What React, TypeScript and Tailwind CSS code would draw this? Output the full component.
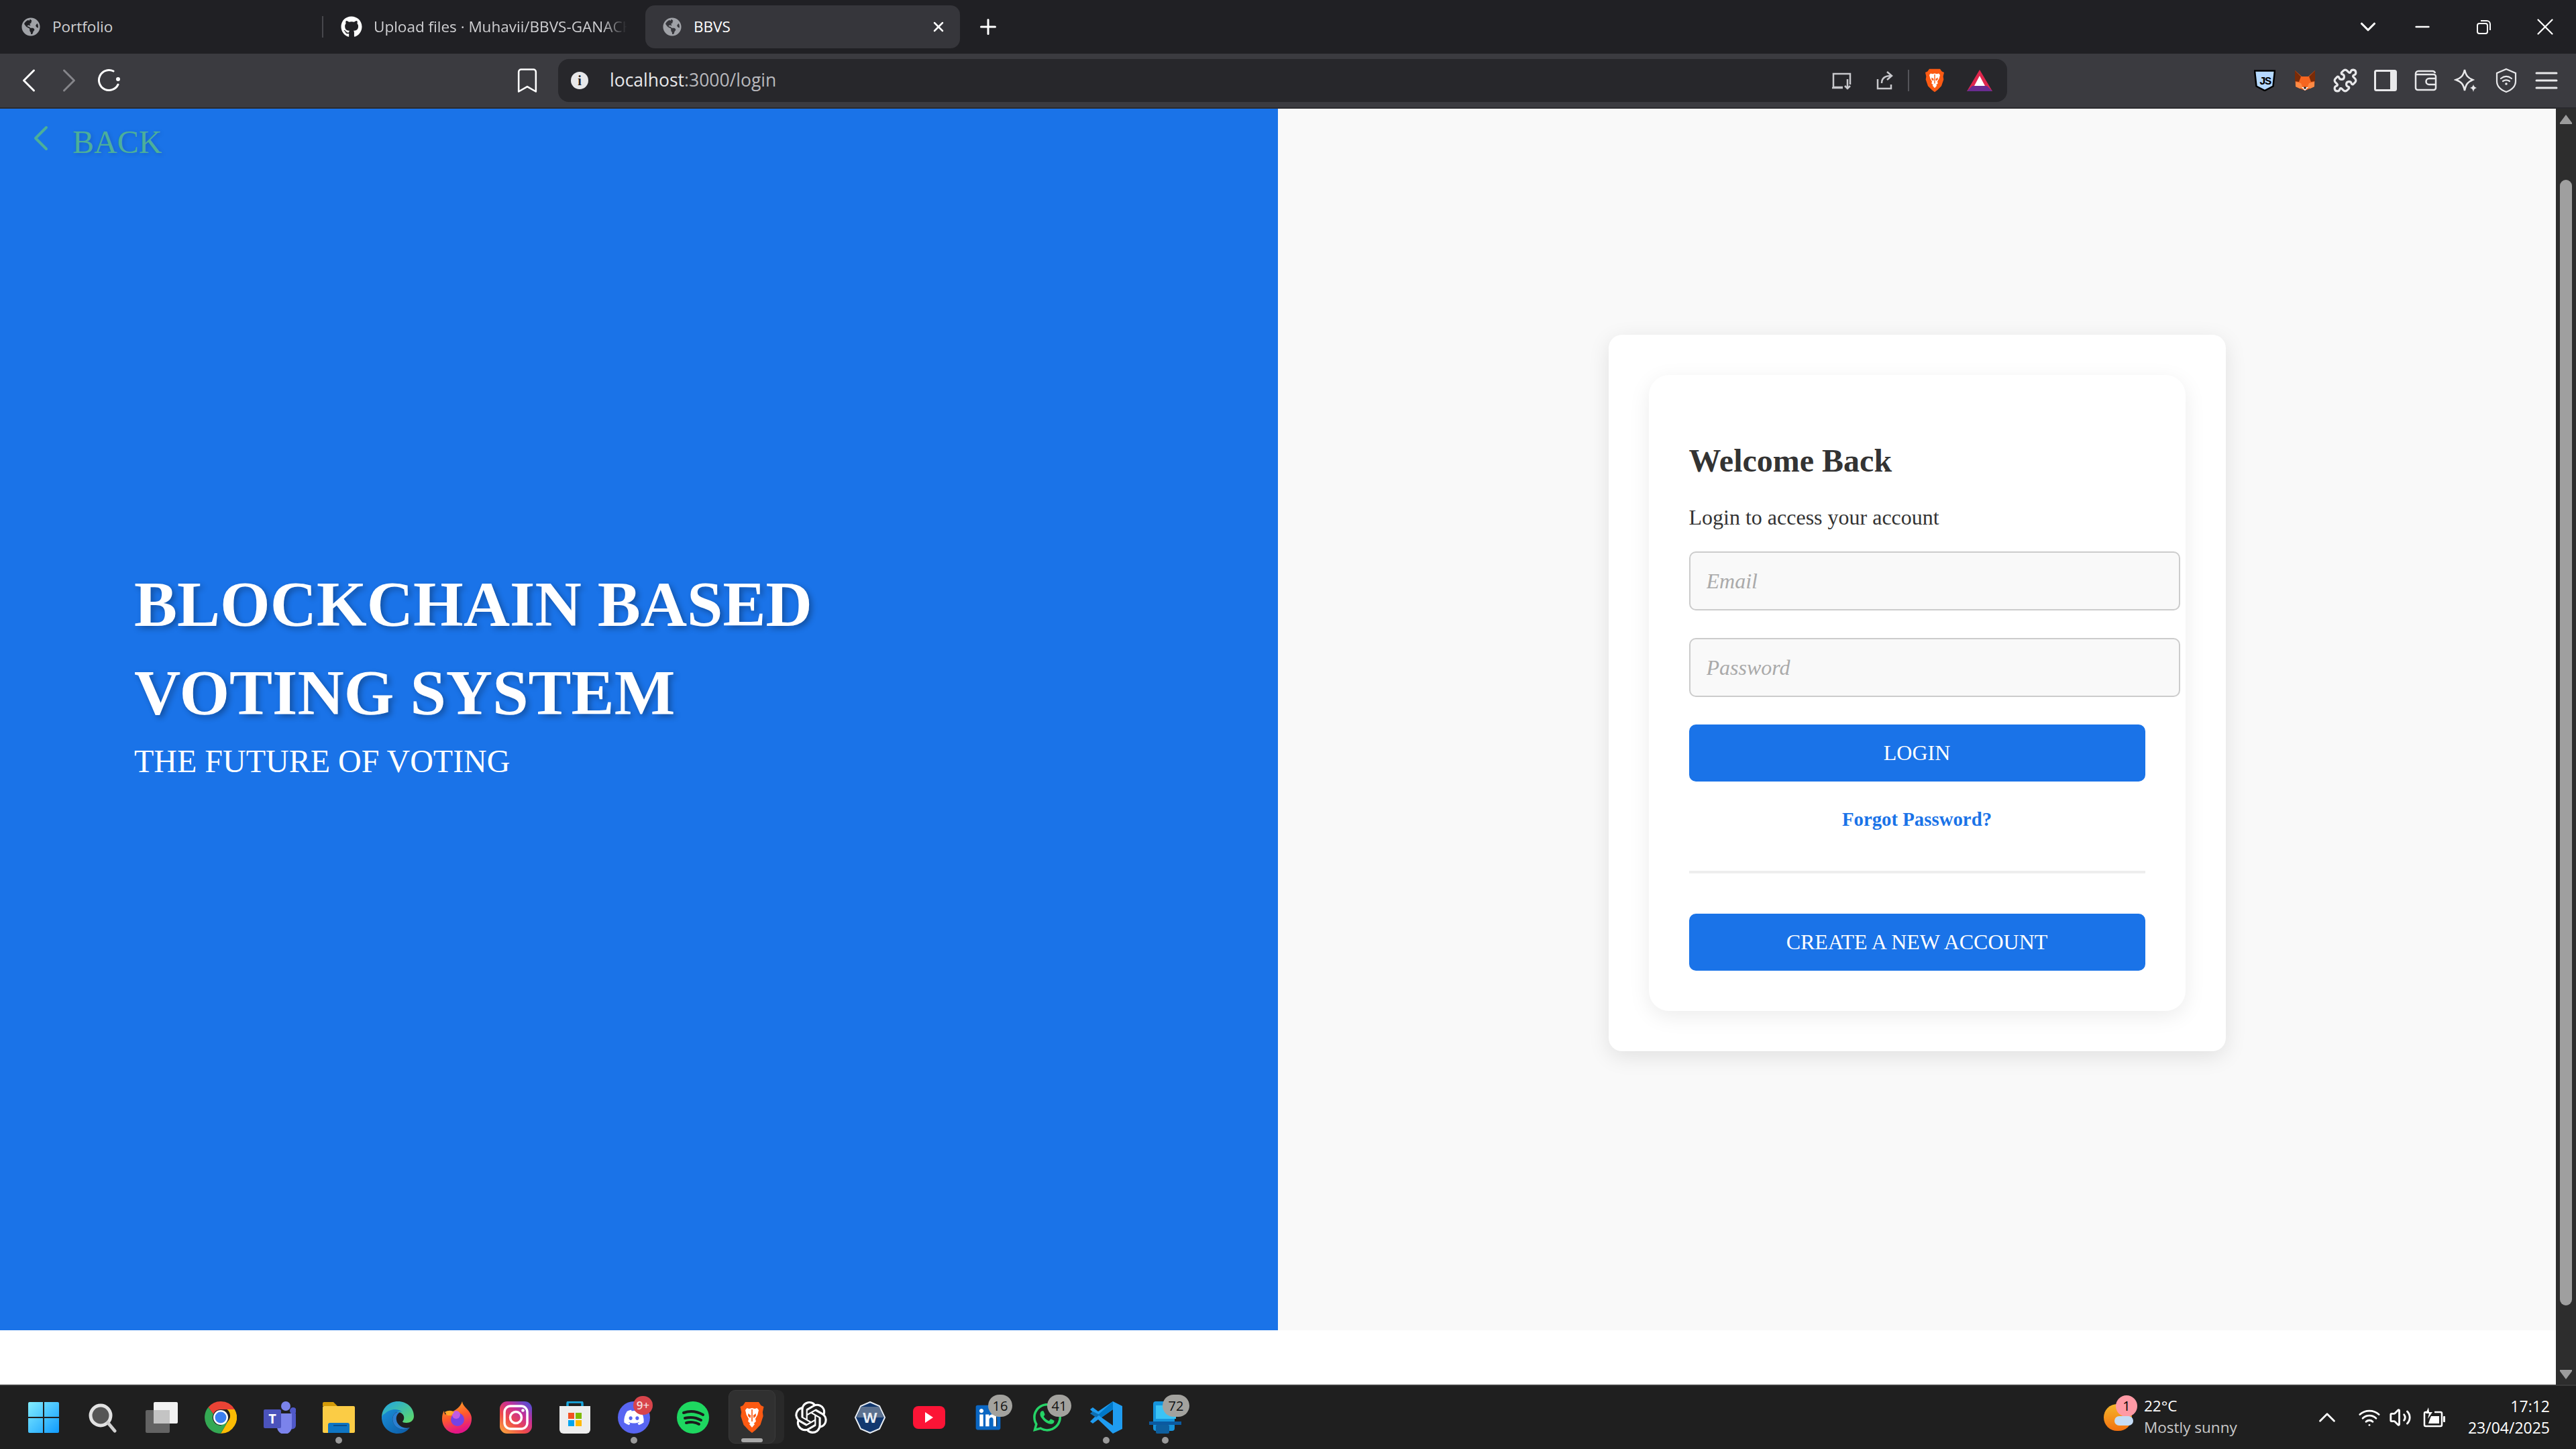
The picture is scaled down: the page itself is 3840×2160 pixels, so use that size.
import React from 'react'
import { ChevronLeft, ChevronRight, ChevronDown, ChevronUp, Bookmark, Plus, X, Minus, Puzzle, Wifi, Volume2 } from 'lucide-react'
import { FaGithub, FaGlobeAmericas, FaLinkedin, FaWhatsapp, FaDiscord } from 'react-icons/fa'
import { SiOpenai } from 'react-icons/si'

function BraveLogo({ width, height }: { width: number; height: number }) {
  return (
    <svg width={width} height={height} viewBox="0 0 48 48" preserveAspectRatio="none">
      <path d="M12 1h24l4 5 5 2-2 8 1 6-5 13-9 8-6 4-6-4-9-8L4 22l1-6-2-8 5-2z" fill="#fb5a13" />
      <path d="M24 10l5 1 4-1 3 3-2 7-4 6 1 4-4 3-3 1-3-1-4-3 1-4-4-6-2-7 3-3 4 1z" fill="#fff" />
      <path d="M17 18l5 3-1 4-4-3zM31 18l-5 3 1 4 4-3zM23 12h2v18h-2z" fill="#fb5a13" />
      <path d="M19 34l5-3 5 3-5 5z" fill="#fff" />
    </svg>
  )
}

function JsShield() {
  return (
    <svg width="32" height="32" viewBox="0 0 32 32">
      <path d="M1 1.5h30l-2.5 23L16 31 3.5 24.500z" fill="#b5d9ff" stroke="#000" strokeWidth="2.500" />
      <text x="16" y="22" textAnchor="middle" fontFamily="Liberation Mono, monospace" fontWeight="700" fontSize="17" letterSpacing="-2" fill="#000">JS</text>
    </svg>
  )
}

function FoxIcon() {
  return (
    <svg width="32" height="30" viewBox="0 0 32 30">
      <path d="M1 0l10 9h10L31 0l-1 24-14 6L2 24z" fill="#f6651f" />
      <path d="M1 0l9 9-3 8-6-1zM31 0l-9 9 3 8 6-1z" fill="#7a2b07" />
      <path d="M2 17l8 2 3 7-5 1-6-3zM30 17l-8 2-3 7 5 1 6-3z" fill="#ff8a45" />
      <path d="M11 25h10l-5 5z" fill="#fff" />
      <circle cx="16" cy="26" r="1.800" fill="#222" />
    </svg>
  )
}

function TaskSlot({ children, dot, pill }: { children: React.ReactNode; dot?: boolean; pill?: boolean }) {
  return (
    <div className="relative flex h-full w-[88px] items-center justify-center">
      {pill && (
        <>
          <div className="absolute top-[6px] left-[13px] h-[80px] w-[79px] rounded-[10px] bg-[#292929]" />
          <div className="absolute top-[6px] left-[9px] h-[80px] w-[70px] rounded-[10px] border border-[#3a3a3a] bg-[#303030]" />
          <div className="absolute bottom-[10px] left-[28px] h-[6px] w-[32px] rounded-full bg-[#a8a8a8]" />
        </>
      )}
      <div className="relative flex h-[48px] w-[48px] items-center justify-center">{children}</div>
      {dot && <div className="absolute bottom-[8px] left-[39px] h-[10px] w-[10px] rounded-full bg-[#9a9a9a]" />}
    </div>
  )
}

function CountBadge({ n, wide }: { n: string; wide?: boolean }) {
  return (
    <div className={`absolute -top-[10px] -right-[12px] flex h-[33px] items-center justify-center rounded-full bg-[#a3a29e] text-[20px] text-[#111] ${wide ? 'w-[40px]' : 'w-[36px]'}`}>
      {n}
    </div>
  )
}

function Taskbar() {
  return (
    <div className="flex h-[96px] items-center border-t-2 border-[#3a3a3a] bg-[#1f1f1f] pl-[21px] font-['Open_Sans',sans-serif]">
      <TaskSlot>
        <svg width="46" height="46" viewBox="0 0 46 46">
          <defs>
            <linearGradient id="win" x1="0" y1="0" x2="1" y2="1">
              <stop offset="0" stopColor="#83edff" />
              <stop offset="1" stopColor="#0f9bff" />
            </linearGradient>
          </defs>
          <path d="M0 2a2 2 0 012-2h20v22H0zM24 0h20a2 2 0 012 2v20H24zM0 24h22v22H2a2 2 0 01-2-2zM24 24h22v20a2 2 0 01-2 2H24z" fill="url(#win)" />
        </svg>
      </TaskSlot>
      <TaskSlot>
        <svg width="46" height="46" viewBox="0 0 46 46">
          <circle cx="20" cy="20" r="15" fill="#555" stroke="#e2e2e2" strokeWidth="5" />
          <path d="M31 31l10 12" stroke="#d0d0d0" strokeWidth="5" strokeLinecap="round" />
        </svg>
      </TaskSlot>
      <TaskSlot>
        <svg width="48" height="46" viewBox="0 0 48 46">
          <rect x="12" y="0" width="36" height="32" rx="2" fill="#f2f2f2" />
          <rect x="0" y="12" width="36" height="34" rx="2" fill="#6a6a6a" fillOpacity="0.9" />
          <rect x="12" y="12" width="24" height="20" fill="#c4c4c4" />
        </svg>
      </TaskSlot>
      <TaskSlot>
        <svg width="48" height="48" viewBox="0 0 48 48">
          <path d="M24 0a24 24 0 0120.8 12H24a12 12 0 00-11 7L5.500 8.800A24 24 0 0124 0z" fill="#ea4335" />
          <path d="M44.800 12A24 24 0 0124 48l10.500-18a12 12 0 00-1-18z" fill="#fbbc04" />
          <path d="M5.500 8.800L13 19a12 12 0 0011 17l10.400-6L24 48A24 24 0 015.500 8.800z" fill="#34a853" />
          <circle cx="24" cy="24" r="11" fill="#fff" />
          <circle cx="24" cy="24" r="8.500" fill="#3b7ff0" />
        </svg>
      </TaskSlot>
      <TaskSlot>
        <svg width="48" height="48" viewBox="0 0 48 48">
          <circle cx="33" cy="7" r="7" fill="#7b83eb" />
          <circle cx="44" cy="14" r="5" fill="#5059c9" />
          <path d="M36 18h12v18a6 6 0 01-10 4z" fill="#5059c9" />
          <path d="M20 18h22v20a11 11 0 01-22 0z" fill="#7b83eb" />
          <rect x="0" y="12" width="26" height="28" rx="2" fill="#4b53bc" />
          <text x="13" y="33" textAnchor="middle" fontFamily="Open Sans, sans-serif" fontWeight="700" fontSize="20" fill="#fff">T</text>
        </svg>
      </TaskSlot>
      <TaskSlot dot>
        <svg width="48" height="46" viewBox="0 0 48 46">
          <path d="M0 2a2 2 0 012-2h14l6 6h-22z" fill="#d49b08" />
          <rect x="0" y="6" width="48" height="40" rx="2" fill="#fbcc45" />
          <path d="M8 34a3 3 0 013-3h26a3 3 0 013 3v12H8z" fill="#0f76c4" />
          <rect x="16" y="34" width="20" height="2" fill="#0a4f8c" />
        </svg>
      </TaskSlot>
      <TaskSlot>
        <svg width="48" height="48" viewBox="0 0 48 48">
          <defs>
            <linearGradient id="edge" x1="0" y1="0" x2="1" y2="1">
              <stop offset="0" stopColor="#1fa2e8" />
              <stop offset="1" stopColor="#62dd62" />
            </linearGradient>
            <linearGradient id="edge2" x1="0" y1="0" x2="1" y2="1">
              <stop offset="0" stopColor="#1a90d8" />
              <stop offset="1" stopColor="#0c59a4" />
            </linearGradient>
          </defs>
          <path d="M24 0C38 0 48 10 48 22c0 7-6 10-11 10-4 0-6-1-6-2 3-3 3-8 0-11-5-5-15-4-21 2C4 26 0 30 0 24 0 10 11 0 24 0z" fill="url(#edge)" />
          <path d="M0 24c0 14 11 24 24 24 8 0 13-3 18-9-7 4-14 3-19 0-6-4-9-13-5-19 3-5 9-6 13-4-8-7-20-4-26 2-3 2-5 3-5 6z" fill="url(#edge2)" />
          <path d="M18 20c-4 6-1 15 5 19 5 3 12 4 19 0-9 3-19-3-20-11-1-5 1-9 5-12-4-1-7 1-9 4z" fill="#2b7fd0" />
        </svg>
      </TaskSlot>
      <TaskSlot>
        <svg width="44" height="48" viewBox="0 0 44 48">
          <defs>
            <linearGradient id="ff" x1="0" y1="0" x2="0.3" y2="1">
              <stop offset="0" stopColor="#ffb625" />
              <stop offset="0.55" stopColor="#ff5a2b" />
              <stop offset="1" stopColor="#e31587" />
            </linearGradient>
          </defs>
          <path d="M30 0c1 8 8 10 12 18 2 4 2 6 2 8 0 13-10 22-22 22S0 39 0 26c0-5 1-9 3-12 0 3 1 5 2 6 1-3 3-5 5-6 0 2 2 3 4 2 6-3 13-7 16-16z" fill="url(#ff)" />
          <circle cx="23" cy="27" r="10" fill="#7542e5" />
          <circle cx="21" cy="20" r="6" fill="#c25be2" />
          <path d="M4 16c5-3 10-3 14 0l-4 5H8z" fill="#ffa72a" />
        </svg>
      </TaskSlot>
      <TaskSlot>
        <svg width="48" height="48" viewBox="0 0 48 48">
          <defs>
            <linearGradient id="ig" x1="0" y1="1" x2="0.8" y2="0">
              <stop offset="0" stopColor="#fdb13c" />
              <stop offset="0.4" stopColor="#ee4a4a" />
              <stop offset="0.7" stopColor="#c92f95" />
              <stop offset="1" stopColor="#5d4bd1" />
            </linearGradient>
          </defs>
          <rect width="48" height="48" rx="11" fill="url(#ig)" />
          <rect x="7" y="7" width="34" height="34" rx="9" fill="none" stroke="#fff" strokeWidth="3.500" />
          <circle cx="24" cy="24" r="8.500" fill="none" stroke="#fff" strokeWidth="3.500" />
          <circle cx="34.500" cy="13.500" r="2.300" fill="#fff" />
        </svg>
      </TaskSlot>
      <TaskSlot>
        <svg width="46" height="48" viewBox="0 0 46 48">
          <path d="M12 10V3a2 2 0 012-2h18a2 2 0 012 2v7" fill="none" stroke="#19a6dd" strokeWidth="3.500" />
          <path d="M0 7h46v35a6 6 0 01-6 6H6a6 6 0 01-6-6z" fill="#eeeeee" />
          <rect x="13" y="17" width="9" height="9" fill="#f25022" />
          <rect x="24" y="17" width="9" height="9" fill="#7fba00" />
          <rect x="13" y="28" width="9" height="9" fill="#00a4ef" />
          <rect x="24" y="28" width="9" height="9" fill="#ffb900" />
        </svg>
      </TaskSlot>
      <TaskSlot dot>
        <div className="flex h-[48px] w-[48px] items-center justify-center rounded-full bg-[#5865f2] text-white">
          <FaDiscord size={32} />
        </div>
        <div className="absolute -top-[8px] -right-[4px] flex h-[28px] w-[29px] items-center justify-center rounded-full bg-[#d8444b] text-[17px] font-semibold text-[#f4dcdc]">9+</div>
      </TaskSlot>
      <TaskSlot>
        <svg width="48" height="48" viewBox="0 0 48 48">
          <circle cx="24" cy="24" r="24" fill="#1ed760" />
          <path d="M10 17c9-3 20-2 29 3M12 25c8-2 17-1 24 3M14 32c6-2 14-1 19 2" fill="none" stroke="#1c1c1c" strokeWidth="4" strokeLinecap="round" />
        </svg>
      </TaskSlot>
      <TaskSlot pill>
        <BraveLogo width={40} height={48} />
      </TaskSlot>
      <TaskSlot>
        <SiOpenai size={48} color="#fff" />
      </TaskSlot>
      <TaskSlot>
        <svg width="46" height="48" viewBox="0 0 46 48">
          <path d="M23 1l14 6 8 17-8 17-14 6-14-6-8-17 8-17z" fill="#12386f" stroke="#e8edf3" strokeWidth="2" />
          <path d="M9 8h28l6 16H3z" fill="#7c8a9d" fillOpacity="0.7" />
          <text x="23" y="32" textAnchor="middle" fontFamily="Open Sans, sans-serif" fontWeight="700" fontSize="22" fill="#e8edf3">W</text>
        </svg>
      </TaskSlot>
      <TaskSlot>
        <div className="flex h-[34px] w-[48px] items-center justify-center rounded-[8px] bg-[#fc1436]">
          <svg width="14" height="18" viewBox="0 0 14 18">
            <path d="M1 1l12 8-12 8z" fill="#fff" />
          </svg>
        </div>
      </TaskSlot>
      <TaskSlot>
        <div className="absolute top-[8px] left-[6px] h-[32px] w-[30px] bg-white" />
        <FaLinkedin size={42} color="#0a66c2" className="relative" />
        <CountBadge n="16" />
      </TaskSlot>
      <TaskSlot>
        <FaWhatsapp size={48} color="#25d366" />
        <CountBadge n="41" />
      </TaskSlot>
      <TaskSlot dot>
        <svg width="48" height="48" viewBox="0 0 48 48">
          <path d="M34 0l14 7v34l-14 7-22-21-8 6-4-3 9-9-9-9 4-3 8 6z" fill="#1f9cf0" />
          <path d="M34 12L17 24l17 12z" fill="#1f1f1f" />
          <path d="M4 15l-4 3 9 6 5-4z" fill="#0f6fb3" />
          <path d="M34 0v12L17 24l-5-4z" fill="#0078c8" />
        </svg>
      </TaskSlot>
      <TaskSlot dot>
        <svg width="48" height="48" viewBox="0 0 48 48">
          <path d="M6 4a4 4 0 014-4h24a4 4 0 014 4v36a4 4 0 01-4 4H10a4 4 0 01-4-4z" fill="#1594dc" />
          <rect x="10" y="6" width="30" height="20" fill="#3ac3f5" />
          <rect x="0" y="30" width="48" height="5" fill="#0b5aa0" />
          <rect x="10" y="35" width="20" height="13" rx="2" fill="#0e5f9e" />
        </svg>
        <CountBadge n="72" wide />
      </TaskSlot>

      <div className="ml-[1355px] flex items-center">
        <div className="relative h-[40px] w-[42px] rounded-full bg-gradient-to-b from-[#f3b52a] to-[#f2700e]">
          <div className="absolute -top-[13px] left-[18px] flex h-[32px] w-[32px] items-center justify-center rounded-full bg-[#ff9aa5] text-[20px] text-black">1</div>
          <div className="absolute top-[18px] left-[16px] h-[14px] w-[28px] rounded-full bg-[#c5dcf5]" />
        </div>
        <div className="ml-[18px] flex w-[142px] flex-col text-[22.5px] leading-[32px]">
          <span className="-mt-[2px] text-white">22°C</span>
          <span className="text-[#c9c9c9]">Mostly sunny</span>
        </div>
      </div>
      <div className="ml-[110px] flex w-[42px] justify-center text-white">
        <ChevronUp size={42} strokeWidth={1.6} />
      </div>
      <div className="ml-[24px] flex w-[36px] justify-center text-white">
        <Wifi size={34} strokeWidth={2} />
      </div>
      <div className="ml-[10px] flex w-[36px] justify-center text-white">
        <Volume2 size={34} strokeWidth={2} />
      </div>
      <div className="ml-[15px] flex w-[36px] justify-center text-white">
        <svg width="34" height="30" viewBox="0 0 34 30" fill="none" stroke="currentColor" strokeWidth="2.500">
          <path d="M9 7H4a2 2 0 00-2 2v17a2 2 0 002 2h22a2 2 0 002-2V9a2 2 0 00-2-2h-9" />
          <path d="M8 0L4 9h5l-2 8 7-10H9z" fill="currentColor" stroke="none" />
          <path d="M12 13h12v11H8l2-6z" fill="currentColor" stroke="none" />
          <rect x="30" y="13" width="3" height="9" rx="1" fill="currentColor" stroke="none" />
        </svg>
      </div>
      <div className="ml-auto flex flex-col pr-[39px] text-right text-[23px] leading-[32px] text-white">
        <span className="-mt-[2px]">17:12</span>
        <span>23/04/2025</span>
      </div>
    </div>
  )
}

function BrowserTabs() {
  return (
    <div className="flex h-20 items-center bg-[#202024] font-['Open_Sans',sans-serif] text-[22.5px]">
      <div className="flex h-16 w-[480px] items-center gap-[18px] pl-8 text-[#cfcfd2]">
        <FaGlobeAmericas size={28} color="#a0a2a7" />
        <span>Portfolio</span>
      </div>
      <div className="h-[32px] w-[2px] bg-[#47474c]" />
      <div className="flex h-16 w-[480px] items-center gap-[17px] pl-[26px] text-[#cfcfd2]">
        <FaGithub size={32} color="#fff" />
        <span className="w-[378px] overflow-hidden whitespace-nowrap [mask-image:linear-gradient(to_right,black_90%,transparent)]">
          Upload files · Muhavii/BBVS-GANACHE
        </span>
      </div>
      <div className="flex h-16 w-[469px] items-center rounded-[14px] bg-[#36363b] pl-[26px] text-white">
        <FaGlobeAmericas size={28} color="#a0a2a7" />
        <span className="ml-[18px]">BBVS</span>
        <X size={24} strokeWidth={2.5} className="ml-auto mr-5 text-white" />
      </div>
      <Plus size={36} strokeWidth={2} className="ml-6 text-white" />
      <div className="ml-auto flex items-center text-white">
        <ChevronDown size={38} strokeWidth={2} className="mr-[46px]" />
        <Minus size={32} strokeWidth={2} className="mr-[63px]" />
        <svg width="24" height="24" viewBox="0 0 24 24" fill="none" stroke="currentColor" strokeWidth="2" className="mr-[59px]">
          <rect x="3" y="7" width="15" height="15" rx="3" />
          <path d="M8 3h9a5 5 0 015 5v9" />
        </svg>
        <X size={42} strokeWidth={1.3} className="mr-[25px]" />
      </div>
    </div>
  )
}

function BrowserToolbar() {
  return (
    <div className="flex h-[82px] items-center border-b-2 border-[#2a2a2e] bg-[#3b3b40] pl-[13px] font-['Open_Sans',sans-serif]">
      <div className="flex w-[60px] justify-center text-white">
        <ChevronLeft size={60} strokeWidth={1.2} />
      </div>
      <div className="flex w-[60px] justify-center text-[#85858a]">
        <ChevronRight size={60} strokeWidth={1.2} />
      </div>
      <div className="flex w-[60px] justify-center text-white">
        <svg width="36" height="36" viewBox="0 0 36 36" fill="none" stroke="currentColor" strokeWidth="3" strokeLinecap="round">
          <path d="M24 4A15 15 0 1031 24" />
          <circle cx="31" cy="16" r="3" fill="currentColor" stroke="none" />
        </svg>
      </div>
      <div className="ml-[563px] flex w-[60px] justify-center text-white">
        <Bookmark size={44} strokeWidth={1.4} />
      </div>
      <div className="ml-4 flex h-16 w-[2160px] items-center rounded-[16px] bg-[#27272b] pl-[19px]">
        <div className="flex h-[26px] w-[26px] items-center justify-center rounded-full bg-[#e8e8ea] font-['Liberation_Serif',serif] text-[20px] font-bold text-[#27272b]">i</div>
        <span className="ml-8 text-[26.5px] text-[#e8e8ea]">
          localhost<span className="text-[#b9b9bd]">:3000/login</span>
        </span>
        <div className="ml-auto flex items-center pr-2">
          <div className="flex w-[66px] justify-center text-[#c8c8cc]">
            <svg width="32" height="32" viewBox="0 0 32 32" fill="none" stroke="currentColor" strokeWidth="2.500">
              <path d="M29 22V6H4v20h14" />
              <path d="M2 27h16M25 14v14m-4-4l4 4 4-4" />
            </svg>
          </div>
          <div className="flex w-[66px] justify-center text-[#c8c8cc]">
            <svg width="32" height="32" viewBox="0 0 32 32" fill="none" stroke="currentColor" strokeWidth="2.500">
              <path d="M4 14v14h20v-6M10 20c0-8 6-11 14-11M18 3l7 6-7 6" />
            </svg>
          </div>
          <div className="h-[32px] w-[2px] bg-[#55555a]" />
          <div className="ml-1 flex w-[68px] justify-center">
            <BraveLogo width={32} height={36} />
          </div>
          <div className="flex w-[66px] justify-center">
            <svg width="38" height="32" viewBox="0 0 38 32">
              <path d="M19 0l19 32H0z" fill="#e0264d" />
              <path d="M19 9l8 15H11z" fill="#fff" />
              <path d="M0 32l8-8h22l8 8z" fill="#6a2c91" />
            </svg>
          </div>
        </div>
      </div>
      <div className="ml-[354px] flex items-center">
        <div className="flex w-[60px] justify-center"><JsShield /></div>
        <div className="flex w-[60px] justify-center"><FoxIcon /></div>
        <div className="flex w-[60px] justify-center text-[#e8e8ea]"><Puzzle size={38} strokeWidth={2} /></div>
        <div className="flex w-[60px] justify-center text-[#e8e8ea]">
          <svg width="34" height="32" viewBox="0 0 34 32">
            <rect x="1.500" y="1.500" width="31" height="29" rx="2" fill="none" stroke="currentColor" strokeWidth="3" />
            <rect x="24" y="1.500" width="9" height="29" fill="currentColor" />
          </svg>
        </div>
        <div className="flex w-[60px] justify-center text-[#e8e8ea]">
          <svg width="34" height="32" viewBox="0 0 34 32" fill="none" stroke="currentColor" strokeWidth="2.500">
            <path d="M2 6a4 4 0 014-4h21a4 4 0 014 3M2 6v21a3 3 0 003 3h24a3 3 0 003-3V10a3 3 0 00-3-3H2" />
            <path d="M32 13H22a4 4 0 000 9h10" />
          </svg>
        </div>
        <div className="flex w-[60px] justify-center text-[#e8e8ea]">
          <svg width="36" height="36" viewBox="0 0 36 36" fill="none" stroke="currentColor" strokeWidth="2.500">
            <path d="M16 2c2 9 5 12 12 15-7 3-10 6-12 16-2-10-5-13-13-16 8-3 11-6 13-15z" />
            <path d="M29 24c1 3 2 4 5 5-3 1-4 2-5 6-1-4-2-5-5-6 3-1 4-2 5-5z" fill="currentColor" stroke="none" />
          </svg>
        </div>
        <div className="flex w-[60px] justify-center text-[#e8e8ea]">
          <svg width="34" height="38" viewBox="0 0 34 38" fill="none" stroke="currentColor" strokeWidth="2.200" strokeLinecap="round">
            <path d="M17 2l14 6v12c0 8-6 13-14 16C9 33 3 28 3 20V8z" />
            <path d="M9 16c5-4 11-4 16 0M12 20c3-2 7-2 10 0" />
            <circle cx="17" cy="24" r="1.800" fill="currentColor" stroke="none" />
          </svg>
        </div>
        <div className="flex w-[60px] justify-center text-[#e8e8ea]">
          <svg width="34" height="28" viewBox="0 0 34 28" stroke="currentColor" strokeWidth="3" strokeLinecap="round">
            <path d="M2 3h30M2 14h30M2 25h30" />
          </svg>
        </div>
      </div>
    </div>
  )
}

function Scrollbar() {
  return (
    <div className="flex w-[30px] flex-col items-center bg-[#2d2d2d] pt-[9px]">
      <svg width="18" height="14" viewBox="0 0 18 14">
        <path d="M9 0l9 12a1 1 0 01-1 2H1a1 1 0 01-1-2z" fill="#9c9c9c" />
      </svg>
      <div className="mt-[83px] h-[1678px] w-[18px] rounded-full bg-[#9f9f9f]" />
      <svg width="18" height="14" viewBox="0 0 18 14" className="mt-[96px]">
        <path d="M9 14L0 2a1 1 0 011-2h16a1 1 0 011 2z" fill="#9c9c9c" />
      </svg>
    </div>
  )
}

function LoginCard() {
  return (
    <div className="w-[920px] rounded-[20px] bg-white p-[60px] shadow-[0_8px_32px_rgba(0,0,0,0.1)]">
      <div className="w-[800px] rounded-[30px] bg-white p-[60px] shadow-[0_8px_32px_rgba(0,0,0,0.08)]">
        <h2 className="mt-[40px] text-[48px] leading-[55px] font-bold text-[#333]">Welcome Back</h2>
        <p className="mt-[39px] text-[32px] leading-[37px] text-[#333]">Login to access your account</p>
        <input
          type="email"
          placeholder="Email"
          className="mt-[32px] block h-[88px] w-[732px] rounded-[10px] border-2 border-[#ccc] bg-[#f9f9f9] px-6 text-[32px] placeholder:text-[#aaa] placeholder:italic"
        />
        <input
          type="password"
          placeholder="Password"
          className="mt-[41px] block h-[88px] w-[732px] rounded-[10px] border-2 border-[#ccc] bg-[#f9f9f9] px-6 text-[32px] placeholder:text-[#aaa] placeholder:italic"
        />
        <button className="mt-[41px] block h-[85px] w-full rounded-[10px] bg-[#1a73e8] pb-[2px] text-[32px] text-white">LOGIN</button>
        <a className="mt-[40px] block text-center text-[28.8px] leading-[33px] font-bold text-[#1a73e8]">Forgot Password?</a>
        <div className="mt-[60px] h-1 bg-[#eeeeee]" />
        <button className="mt-[60px] block h-[85px] w-full rounded-[10px] bg-[#1a73e8] pb-[2px] text-[32px] text-white">CREATE A NEW ACCOUNT</button>
      </div>
    </div>
  )
}

export default function App() {
  return (
    <div className="flex h-[2160px] w-[3840px] flex-col overflow-hidden bg-white font-['Liberation_Serif',serif]">
      <BrowserTabs />
      <BrowserToolbar />
      <div className="flex h-[1902px]">
        <div className="flex-1">
          <div className="flex h-[1821px]">
            <div className="w-[1905px] bg-[#1a73e8] pt-[22px]">
              <div className="flex items-start pl-[26px] text-[#4caf9a] [text-shadow:2px_2px_6px_rgba(0,0,0,0.15)]">
                <div className="flex h-[44px] w-[82px] items-center justify-center pr-[12px]">
                  <ChevronLeft size={64} strokeWidth={1.5} className="shrink-0" />
                </div>
                <span className="text-[48px] leading-[55px]">BACK</span>
              </div>
              <div className="mt-[596px] pl-[200px] text-white">
                <h1 className="text-[96px] leading-[132px] font-bold [text-shadow:4px_4px_8px_rgba(0,0,0,0.3)]">
                  BLOCKCHAIN BASED
                  <br />
                  VOTING SYSTEM
                </h1>
                <p className="mt-[8px] text-[48px] leading-[55px]">THE FUTURE OF VOTING</p>
              </div>
            </div>
            <div className="flex w-[1905px] justify-center bg-[#f9f9f9] pt-[337px]">
              <div>
                <LoginCard />
              </div>
            </div>
          </div>
        </div>
        <Scrollbar />
      </div>
      <Taskbar />
    </div>
  )
}
